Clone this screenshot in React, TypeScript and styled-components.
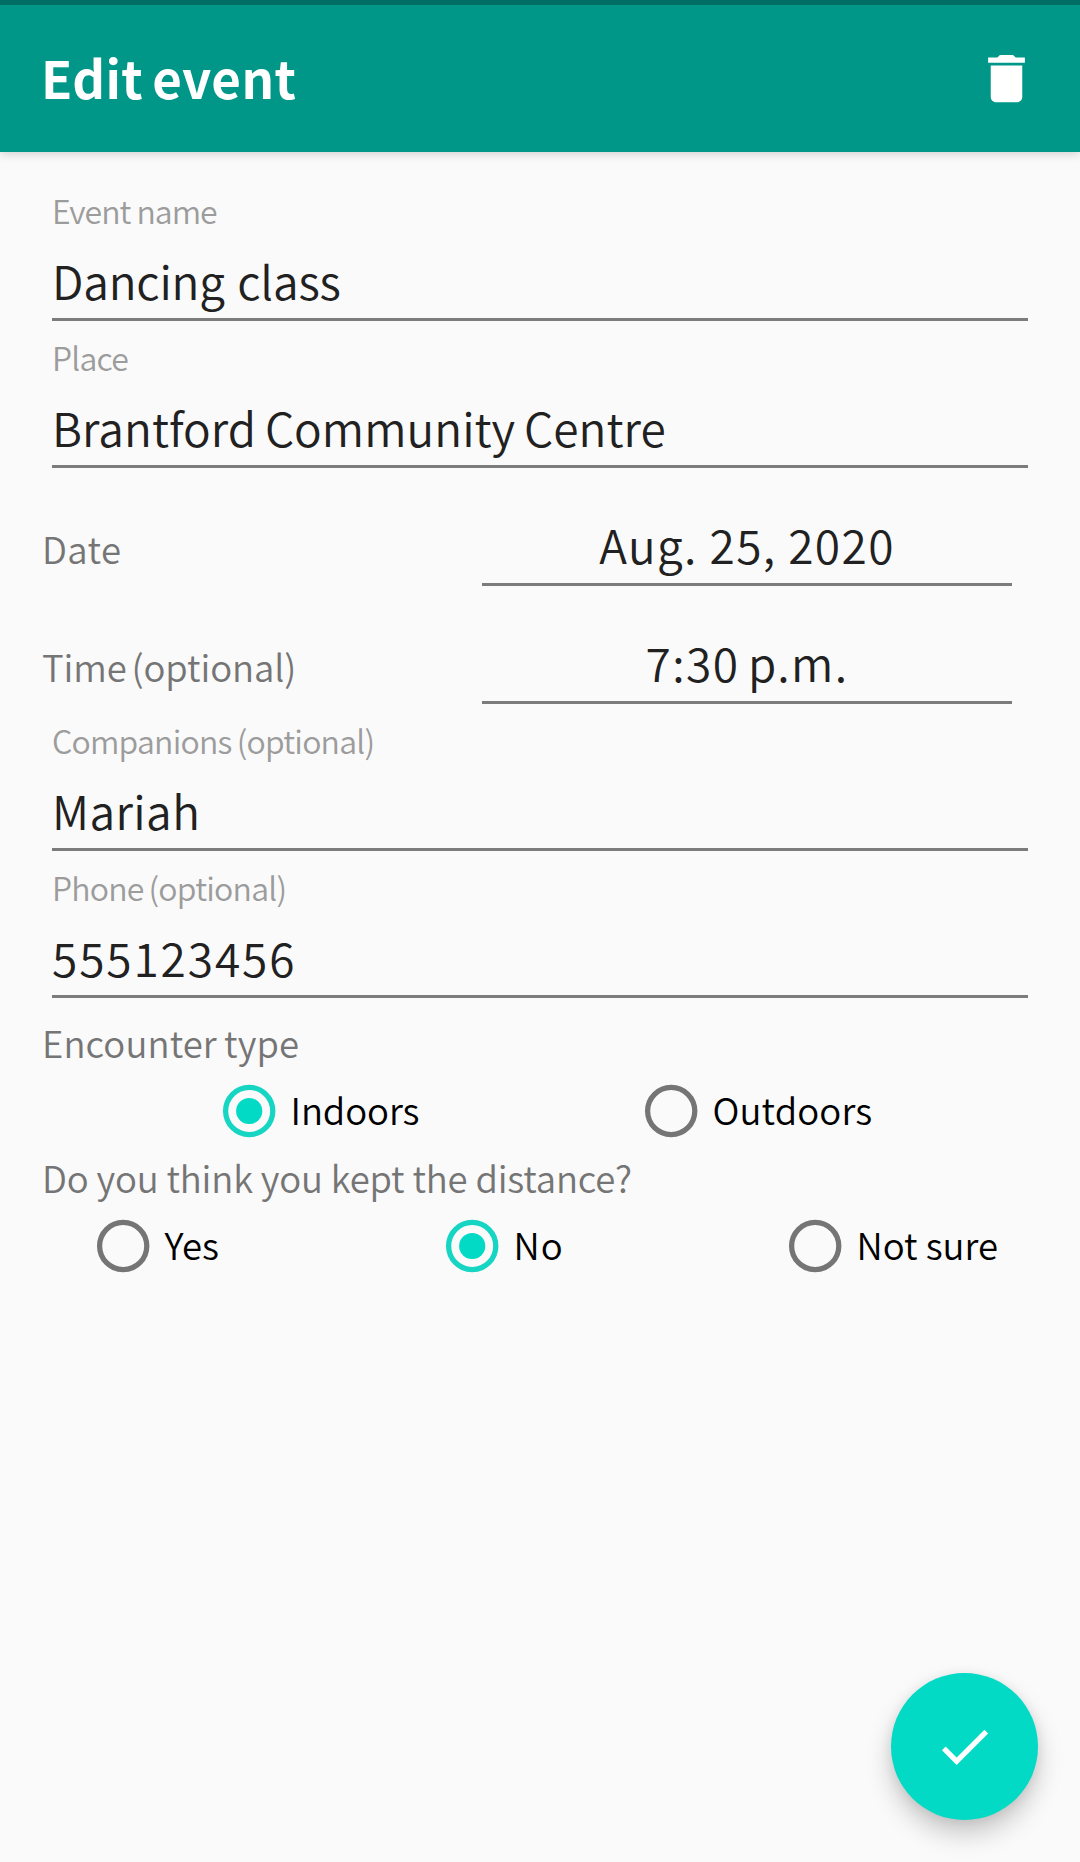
import React from 'react';
import styled, { createGlobalStyle } from 'styled-components';

const GlobalStyle = createGlobalStyle`
  body { margin: 0; background: #fafafa; }
  * { box-sizing: border-box; }
`;

const Screen = styled.div`
  height: 1862px;
  position: relative;
  overflow: hidden;
  display: flex;
  flex-direction: column;
  background: #fafafa;
  color: #212121;
  font-family: "Noto Sans CJK SC", "Noto Sans", sans-serif;
  font-weight: 350;
  white-space: nowrap;
`;

const AppBar = styled.header`
  height: 152px;
  flex: none;
  display: flex;
  align-items: center;
  justify-content: space-between;
  padding: 0 42px 0 41px;
  border-top: 5px solid #006d65;
  background: #009788;
  box-shadow: 0 1px 10px rgba(0, 0, 0, 0.2);
`;

const Title = styled.h1`
  margin: 0;
  padding-bottom: 3px;
  color: #fff;
  font-size: 51px;
  font-weight: 700;
  line-height: 76px;
  letter-spacing: 0.4px;
  word-spacing: -3px;
`;

const IconButton = styled.button`
  width: 63px;
  height: 63px;
  padding: 0;
  border: 0;
  background: none;
  svg { display: block; width: 63px; height: 63px; }
`;

const Form = styled.main`
  display: flex;
  flex-direction: column;
  padding: 22px 42px 0;
`;

interface Spacing {
  $track?: number;
  $word?: number;
}

const Text = styled.span<Spacing>`
  letter-spacing: ${p => p.$track ?? 0}px;
  word-spacing: ${p => p.$word ?? 0}px;
`;

const FieldBox = styled.label`
  display: flex;
  flex-direction: column;
  height: 147px;
  margin: 0 10px;
  padding-top: 15px;
  border-bottom: 3px solid #7c7c7c;
`;

const Hint = styled(Text)`
  font-size: 32px;
  line-height: 42px;
  color: #9c9c9c;
`;

const Value = styled(Text)`
  margin-top: 20px;
  font-size: 46px;
  line-height: 58px;
`;

const PickerRow = styled.div`
  display: flex;
  justify-content: space-between;
  height: 118px;
  padding-right: 26px;
`;

const Caption = styled(Text)`
  font-size: 36.5px;
  line-height: 52px;
  color: #757575;
`;

const PickerCaption = styled(Caption)`
  padding-top: 55px;
`;

const Picker = styled(Text)`
  width: 530px;
  padding-top: 46px;
  border-bottom: 3px solid #7c7c7c;
  font-size: 46px;
  line-height: 60px;
  text-align: center;
`;

const Question = styled.section<{ $top?: number }>`
  display: flex;
  flex-direction: column;
  padding-top: ${p => p.$top ?? 0}px;
`;

const Options = styled.div<{ $indent: number }>`
  display: flex;
  gap: 227px;
  height: 83px;
  padding: 15px 0 0 ${p => p.$indent}px;
`;

const Option = styled.div<{ $width: number }>`
  display: flex;
  flex: none;
  width: ${p => p.$width}px;
  height: 53px;
  align-items: center;
  gap: 15px;
`;

const Radio = styled.span`
  flex: none;
  display: block;
  width: 53px;
  height: 53px;
  svg { display: block; width: 53px; height: 53px; overflow: visible; }
`;

const OptionText = styled(Text)`
  padding-bottom: 1px;
  font-size: 36.5px;
  line-height: 50px;
  color: #000;
`;

const Fab = styled.button`
  position: absolute;
  right: 42px;
  bottom: 42px;
  width: 147px;
  height: 147px;
  display: grid;
  place-items: center;
  padding: 0;
  border: 0;
  border-radius: 50%;
  background: #03dac5;
  box-shadow: 0 14px 26px rgba(0, 0, 0, 0.2), 0 2px 12px rgba(0, 0, 0, 0.08);
  svg { display: block; width: 63px; height: 63px; }
`;

interface FieldProps {
  hint: string;
  hintSpacing?: Spacing;
  value: string;
  valueSpacing?: Spacing;
}

function Field({ hint, hintSpacing, value, valueSpacing }: FieldProps) {
  return (
    <FieldBox>
      <Hint {...hintSpacing}>{hint}</Hint>
      <Value {...valueSpacing}>{value}</Value>
    </FieldBox>
  );
}

function Choice({ label, width, track, on }: { label: string; width: number; track?: number; on?: boolean }) {
  return (
    <Option $width={width}>
      <Radio>
        <svg viewBox="0 0 53 53">
          <circle cx="26.2" cy="27" r="23.6" fill="none" stroke={on ? '#16d5c3' : '#757575'} strokeWidth="5.25" />
          {on && <circle cx="26.2" cy="27" r="13.1" fill="#03dac5" />}
        </svg>
      </Radio>
      <OptionText $track={track}>{label}</OptionText>
    </Option>
  );
}

export default function App() {
  return (
    <Screen>
      <GlobalStyle />
      <AppBar>
        <Title>Edit event</Title>
        <IconButton aria-label="Delete">
          <svg viewBox="0 0 24 24" fill="#fff">
            <path d="M6 19c0 1.1.9 2 2 2h8c1.1 0 2-.9 2-2V7H6v12zM19 4h-3.5l-1-1h-5l-1 1H5v2h14V4z" />
          </svg>
        </IconButton>
      </AppBar>
      <Form>
        <Field
          hint="Event name"
          hintSpacing={{ $track: -1 }}
          value="Dancing class"
          valueSpacing={{ $track: -0.2, $word: 2.5 }}
        />
        <Field
          hint="Place"
          hintSpacing={{ $track: -0.75 }}
          value="Brantford Community Centre"
          valueSpacing={{ $track: 0.04, $word: -1.5 }}
        />
        <PickerRow>
          <PickerCaption $track={0.4}>Date</PickerCaption>
          <Picker $track={1.4}>Aug. 25, 2020</Picker>
        </PickerRow>
        <PickerRow>
          <PickerCaption $track={-0.1} $word={-3.3}>Time (optional)</PickerCaption>
          <Picker $track={1.4} $word={-3}>7:30 p.m.</Picker>
        </PickerRow>
        <Field
          hint="Companions (optional)"
          hintSpacing={{ $track: -0.79, $word: -1.2 }}
          value="Mariah"
          valueSpacing={{ $track: 0.4 }}
        />
        <Field
          hint="Phone (optional)"
          hintSpacing={{ $track: -0.77, $word: -1.5 }}
          value="555123456"
          valueSpacing={{ $track: 1.9 }}
        />
        <Question $top={19}>
          <Caption $track={0.1} $word={-1}>Encounter type</Caption>
          <Options $indent={180.5}>
            <Choice label="Indoors" width={195} track={-0.1} on />
            <Choice label="Outdoors" width={230} track={0.12} />
          </Options>
        </Question>
        <Question>
          <Caption $track={-0.17}>Do you think you kept the distance?</Caption>
          <Options $indent={54.5}>
            <Choice label="Yes" width={122} />
            <Choice label="No" width={116} track={1} on />
            <Choice label="Not sure" width={210} />
          </Options>
        </Question>
      </Form>
      <Fab aria-label="Save">
        <svg viewBox="0 0 24 24" fill="#fff">
          <path d="M9 16.17L4.83 12l-1.42 1.41L9 19 21 7l-1.41-1.41z" />
        </svg>
      </Fab>
    </Screen>
  );
}
